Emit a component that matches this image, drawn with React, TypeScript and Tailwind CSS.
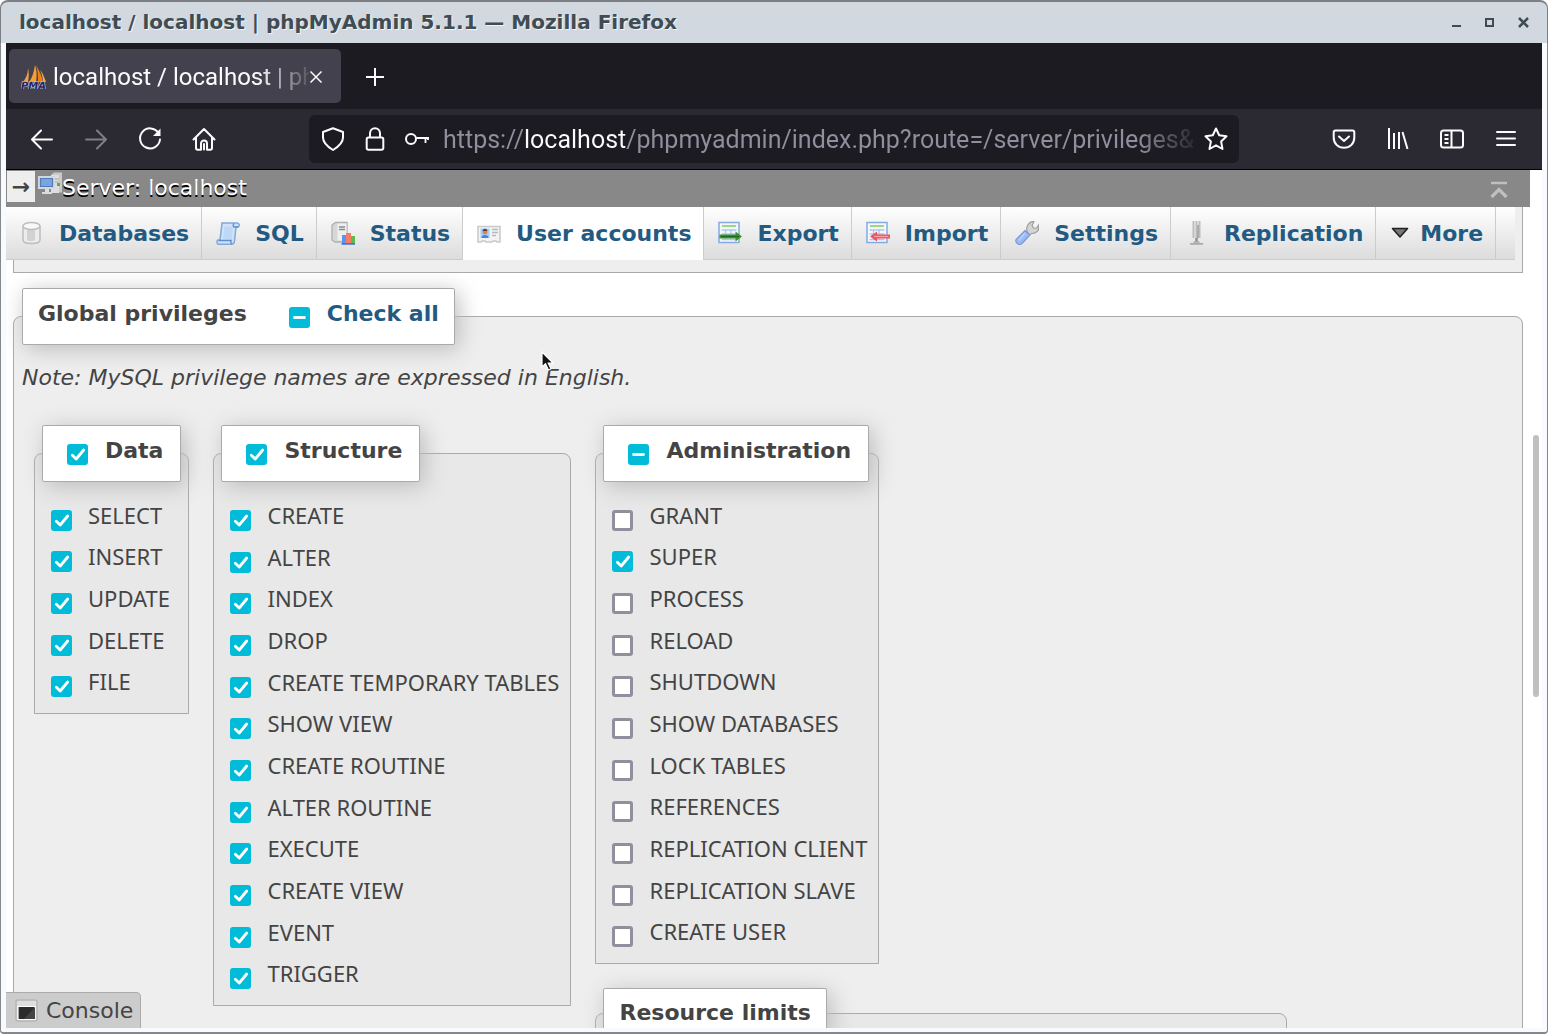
import { useEffect, useRef, useState, type ReactNode } from "react";

const DEJAVU = "font-['DejaVu_Sans','Verdana',sans-serif]";

type Mark = "on" | "off" | "mixed";

function CheckBox({ id, initial }: { id: string; initial: Mark }) {
  const [mark, setMark] = useState<Mark>(initial);
  const ref = useRef<HTMLInputElement>(null);
  useEffect(() => {
    if (ref.current) ref.current.indeterminate = mark === "mixed";
  }, [mark]);
  return (
    <span className="relative block h-[21px] w-[21px] shrink-0">
      <input
        ref={ref}
        id={id}
        type="checkbox"
        checked={mark === "on"}
        onChange={(e) => setMark(e.target.checked ? "on" : "off")}
        className="block h-[21px] w-[21px] appearance-none rounded-[3px] border-3 border-[#8f8f9d] bg-white checked:border-[#00bcd8] checked:bg-[#00bcd8] indeterminate:border-[#00bcd8] indeterminate:bg-[#00bcd8]"
      />
      {mark !== "off" && (
        <svg viewBox="0 0 21 21" className="pointer-events-none absolute inset-0 h-full w-full" fill="none" stroke="#fff" strokeWidth="2.8" strokeLinecap="round" strokeLinejoin="round">
          {mark === "on" ? <path d="M5.3 11.2 9.2 15 16.7 6" /> : <path d="M4.4 10.5H16.6" strokeLinecap="butt" />}
        </svg>
      )}
    </span>
  );
}

const LEGEND = "flex items-center rounded-xs border border-[#aaa] bg-white text-[22px] font-bold shadow-[4px_4px_22px_#bbb]";

function PrivilegeGroup({ name, mark, items, listClass }: { name: string; mark: Mark; items: [string, boolean][]; listClass: string }) {
  return (
    <fieldset className="rounded-t-lg border border-[#aaa] bg-[#e8e8e8] px-[7px] pb-[9px]">
      <legend className={`${LEGEND} h-[57px] gap-[17px] pt-0.5 pr-[17px] pl-6`}>
        <CheckBox id={`group-${name}`} initial={mark} />
        <label htmlFor={`group-${name}`} className="pb-2">
          {name}
        </label>
      </legend>
      <ul className={`mt-3.5 flex flex-col ${listClass}`}>
        {items.map(([text, on]) => (
          <li key={text} className="flex flex-1 items-center gap-4 pl-[9px]">
            <span className="mt-[7px]">
              <CheckBox id={`priv-${text}`} initial={on ? "on" : "off"} />
            </span>
            <label htmlFor={`priv-${text}`} className="pb-1 font-['Noto_Sans',sans-serif] text-[22px] leading-7 whitespace-nowrap">
              {text}
            </label>
          </li>
        ))}
      </ul>
    </fieldset>
  );
}

const on = (list: string[]): [string, boolean][] => list.map((t) => [t, true]);

const DATA = on(["SELECT", "INSERT", "UPDATE", "DELETE", "FILE"]);
const STRUCTURE = on(["CREATE", "ALTER", "INDEX", "DROP", "CREATE TEMPORARY TABLES", "SHOW VIEW", "CREATE ROUTINE", "ALTER ROUTINE", "EXECUTE", "CREATE VIEW", "EVENT", "TRIGGER"]);
const ADMIN: [string, boolean][] = ["GRANT", "SUPER", "PROCESS", "RELOAD", "SHUTDOWN", "SHOW DATABASES", "LOCK TABLES", "REFERENCES", "REPLICATION CLIENT", "REPLICATION SLAVE", "CREATE USER"].map((t) => [t, t === "SUPER"]);

function Svg({ children, box = "0 0 24 24", className = "h-6 w-6" }: { children: ReactNode; box?: string; className?: string }) {
  return (
    <svg viewBox={box} className={`shrink-0 ${className}`} fill="none" aria-hidden="true">
      {children}
    </svg>
  );
}

const dbIcon = (
  <Svg>
    <path d="M3 5v14c0 2 3.5 3.5 8.500 3.500S20 21 20 19V5" fill="#ececec" stroke="#bdbdbd" strokeWidth="1.500" />
    <path d="M7 9v10c2 1.500 6 1.500 8 0V9z" fill="#d2d2d2" />
    <ellipse cx="11.500" cy="5" rx="8.500" ry="3.500" fill="#f8f8f8" stroke="#bdbdbd" strokeWidth="1.500" />
  </Svg>
);
const sqlIcon = (
  <Svg>
    <path d="M6 2h15c2 0 3 2 1.500 4H20l-1.500 14c-.2 2-1 3.200-3 3.200H2.500C.5 23 .5 19.500 2 19h2z" fill="#cfe2f8" stroke="#7fa9db" strokeWidth="1.500" />
    <path d="M8.500 5.500h8.500l-1.500 13H7z" fill="#bdd9f7" />
    <path d="M18 2.500c-1 1-1 3 0 3.500h4M2.500 19.500h12.500c-.5 1 0 3 1 3.500" stroke="#5f90cc" strokeWidth="1.400" />
  </Svg>
);
const statusIcon = (
  <Svg>
    <path d="M1 4 4.500 1.500H16V18l-4 3H4l-3-2z" fill="#d7d7d7" stroke="#b0b0b0" strokeWidth="1.300" />
    <path d="M6.500 2.500h9v17h-9z" fill="#efefef" />
    <path d="M8 6h6M8 8.500h6" stroke="#8c8c8c" strokeWidth="1.300" />
    <path d="M11 14h4v9h-4z" fill="#5b93f0" />
    <path d="M15 12h5v11h-5z" fill="#f57d63" />
    <path d="M20 15h4v8h-4z" fill="#5dbb4d" />
    <path d="M10.500 23h13.500" stroke="#2f62cc" strokeWidth="1.300" />
  </Svg>
);
const userIcon = (
  <Svg>
    <path d="M1 4.500h22V20h-3l-1-1h-3l-1 1H9l-1-1H5l-1 1H1z" fill="#f3f3f3" stroke="#c9c9c9" strokeWidth="1.500" />
    <path d="M3.500 6.500h9V16h-9z" fill="#a5cdf6" />
    <circle cx="8" cy="10" r="2.400" fill="#c98a58" />
    <path d="M5.600 9c0-3 4.800-3 4.800 0z" fill="#5f4030" />
    <path d="M4.500 16c0-4 7-4 7 0z" fill="#3f87d8" />
    <path d="M15 7.500h6M15 10.500h6M15 13.500h4" stroke="#b5b9c0" strokeWidth="1.300" />
  </Svg>
);
const sheet = (
  <>
    <path d="M1 1.500h20v20H1z" fill="#f4f8fe" stroke="#84aae2" strokeWidth="1.500" />
    <path d="M4 5h14" stroke="#9fd686" strokeWidth="2" />
    <path d="M3.500 9h15M3.500 13h15M3.500 18.500h15M7.500 9v10M13 9v10" stroke="#aac6ee" strokeWidth="1.300" />
  </>
);
const exportIcon = (
  <Svg>
    {sheet}
    <path d="M1.500 13.500h16V10.500l6.500 5-6.500 5v-3H1.500z" fill="#3c9131" />
    <path d="M3 15.500h18" stroke="#1f6d1a" strokeWidth="1.300" />
  </Svg>
);
const importIcon = (
  <Svg>
    {sheet}
    <path d="M24 13.500H11V10.500l-7 5 7 5v-3H24z" fill="#f0525a" />
    <path d="M8 15.500h14.500" stroke="#ff9da0" strokeWidth="1.300" />
  </Svg>
);
const settingsIcon = (
  <Svg>
    <path d="M12 10c-1-4 1-8 5-9.500l2 .2-2 3.500 1.500 2.800 3 .2 2-3.200c1.500 5-2 8.500-7 8.500L14 14z" fill="#d4d4d4" stroke="#999" strokeWidth="1.100" />
    <path d="M10 9.500 15 14 6.500 23c-3 1.500-6.500-1-5.500-4.500z" fill="#9db9f1" stroke="#7596da" strokeWidth="1.100" />
    <path d="M10 12 4 19.500" stroke="#b9cdf8" strokeWidth="2" />
  </Svg>
);
const replicationIcon = (
  <Svg>
    <path d="M8.500 0v17M11.500 0v18M14.500 0v17" stroke="#bdbdbd" strokeWidth="2" />
    <path d="M13 4v13" stroke="#8f8f8f" strokeWidth="1.200" />
    <path d="M11.500 17v4" stroke="#909090" strokeWidth="2.500" />
    <path d="M5 22.800h13M8.500 21h6" stroke="#a9a9a9" strokeWidth="1.700" />
  </Svg>
);
const moreIcon = (
  <Svg>
    <path d="M4.500 7.500h15L12 16z" fill="#777" stroke="#222" strokeWidth="1.600" strokeLinejoin="round" />
  </Svg>
);

const TABS: { name: string; icon: ReactNode; active?: boolean }[] = [
  { name: "Databases", icon: dbIcon },
  { name: "SQL", icon: sqlIcon },
  { name: "Status", icon: statusIcon },
  { name: "User accounts", icon: userIcon, active: true },
  { name: "Export", icon: exportIcon },
  { name: "Import", icon: importIcon },
  { name: "Settings", icon: settingsIcon },
  { name: "Replication", icon: replicationIcon },
];

const TAB = "flex grow items-center border-r border-[#ccc] pr-2.5 text-[22px] font-bold whitespace-nowrap text-[#235a81]";
const SHADED = "border-b bg-linear-to-b from-white to-[#dcdcdc]";

function TitleBar() {
  return (
    <header className="flex h-[43px] shrink-0 items-center justify-between rounded-t-lg border-x border-t-2 border-[#7b7f83] bg-[#d1d8e0] pr-4 pb-0.5 pl-[18px] text-[#3f4c54]">
      <h1 className="text-[20px] font-bold [text-shadow:1px_1px_0_#f2f4f6]">localhost / localhost | phpMyAdmin 5.1.1 — Mozilla Firefox</h1>
      <div className="flex items-center gap-[17px]">
        <button aria-label="Minimize">
          <Svg box="0 0 16 16" className="h-4 w-4"><path d="M3 12h9" stroke="#3f4c54" strokeWidth="2" /></Svg>
        </button>
        <button aria-label="Maximize">
          <Svg box="0 0 16 16" className="h-4 w-4"><path d="M4 5h7v7H4z" stroke="#3f4c54" strokeWidth="2" /></Svg>
        </button>
        <button aria-label="Close window">
          <Svg box="0 0 16 16" className="h-4 w-4"><path d="m4 4 9 9m0-9-9 9" stroke="#3f4c54" strokeWidth="2.500" /></Svg>
        </button>
      </div>
    </header>
  );
}

function TabStrip() {
  return (
    <div className="flex h-[66px] shrink-0 items-center bg-[#1c1b22] pl-[3px] font-['Roboto',sans-serif] text-[#fbfbfe]">
      <div className="flex h-[54px] w-[332px] items-center rounded-[5px] bg-[#42414d] pt-0.5 pl-3">
        <Svg box="0 0 26 24" className="mr-1.5 h-6 w-[26px]">
          <path d="M7 3C7 9 5 13 2 17h5c1-5 1-10 0-14z" fill="#f0a24b" />
          <path d="M14 0C13 7 11 13 8 17h7c1-6 1-11-1-17z" fill="#f89c33" />
          <path d="M15 0c3 5 6 11 7 17h-5c0-6 0-11-2-17z" fill="#e98117" />
          <path d="M19 5c3 3 4 7 6 12h-3c0-4-1-8-3-12z" fill="#f9a94c" />
          <text x="0" y="23.500" fontSize="10" fontWeight="700" fontStyle="italic" fontFamily="DejaVu Sans, sans-serif" textRendering="geometricPrecision" fill="#26265e" stroke="#c6c6e0" strokeWidth="1.200" paintOrder="stroke">PMA</text>
        </Svg>
        <span className="w-[256px] overflow-hidden text-2xl whitespace-nowrap [mask-image:linear-gradient(to_right,#000_205px,transparent_262px)]">localhost / localhost | ph</span>
        <button aria-label="Close tab" className="-ml-0.5">
          <Svg box="0 0 18 18" className="h-[18px] w-[18px]"><path d="m3.500 3.500 11 11m0-11-11 11" stroke="#fbfbfe" strokeWidth="1.500" /></Svg>
        </button>
      </div>
      <button aria-label="New tab" className="mt-0.5 ml-[22px]">
        <Svg><path d="M12 3v18M3 12h18" stroke="#fbfbfe" strokeWidth="2" /></Svg>
      </button>
    </div>
  );
}

function Toolbar() {
  const line = { stroke: "#fbfbfe", strokeWidth: 2, strokeLinecap: "round" as const, strokeLinejoin: "round" as const };
  return (
    <div className="flex h-[61px] shrink-0 items-center border-b border-black bg-[#2b2a33] pr-6 pl-6">
      <div className="flex items-center gap-[30px]">
        <button aria-label="Back"><Svg><path d="M22 12.500H2m9-9-9 9 9 9" {...line} /></Svg></button>
        <button aria-label="Forward" disabled className="opacity-40"><Svg><path d="M2 12.500h20m-9-9 9 9-9 9" {...line} /></Svg></button>
        <button aria-label="Reload">
          <Svg>
            <path d="M20.500 6A10 10 0 1 0 22 12.500" {...line} />
            <path d="M22.500 1.500V9H15z" fill="#fbfbfe" />
          </Svg>
        </button>
        <button aria-label="Home">
          <Svg>
            <path d="M1.500 12.500 12 2l10.500 10.500M4 10.500V21c0 1 .7 1.700 1.700 1.700H9V16.500c0-1.700 1.200-3 3-3s3 1.300 3 3v6.200h3.300c1 0 1.700-.7 1.700-1.700V10.500M12 22.500V17" {...line} />
          </Svg>
        </button>
      </div>
      <div className="ml-[93px] flex h-12 min-w-0 flex-1 items-center rounded-md bg-[#1c1b22] pr-[11px] pl-3">
        <button aria-label="Tracking protection"><Svg><path d="M12 1.200 2 5v5.500c0 5 5 9.500 10 12.500 5-3 10-7.500 10-12.500V5z" {...line} /></Svg></button>
        <button aria-label="Connection is secure" className="ml-[18px]">
          <Svg><path d="M5.500 10.500h13c1 0 1.800.8 1.800 1.800V21c0 1-.8 1.800-1.800 1.800h-13c-1 0-1.800-.8-1.800-1.800v-8.700c0-1 .8-1.800 1.800-1.800zM7 10.500V6.500c0-3.200 2.200-5.300 5-5.300s5 2.100 5 5.300v4" {...line} /></Svg>
        </button>
        <button aria-label="Saved login" className="ml-[18px]">
          <Svg>
            <circle cx="6" cy="12" r="5" stroke="#fbfbfe" strokeWidth="2" />
            <path d="M11 11h13M20.500 11v5M23 11v2" stroke="#fbfbfe" strokeWidth="1.800" />
          </Svg>
        </button>
        <input
          aria-label="Address"
          type="text"
          defaultValue="https://localhost/phpmyadmin/index.php?route=/server/privileges&"
          className="ml-3.5 h-10 w-[750px] min-w-0 shrink bg-linear-[to_right,#8f8f9d_81px,#fbfbfe_81px,#fbfbfe_184px,#8f8f9d_184px,#8f8f9d_695px,transparent_760px] bg-clip-text font-['Roboto',sans-serif] text-[25px] text-transparent outline-none"
        />
        <button aria-label="Bookmark this page" className="ml-auto">
          <Svg><path d="m12 1.500 3.200 6.800 7.300 1-5.400 5.100 1.400 7.600-6.500-3.700L5.500 22l1.400-7.600L1.500 9.300l7.300-1z" {...line} /></Svg>
        </button>
      </div>
      <div className="ml-[93px] flex items-center gap-[30px]">
        <button aria-label="Save to Pocket"><Svg><path d="M3.500 3.500h17c1 0 1.800.8 1.800 1.800v5.200c0 6-4.300 10.300-10.300 10.300S1.700 16.500 1.700 10.500V5.300c0-1 .8-1.800 1.800-1.800zM7 9.500l5 4.500 5-4.500" {...line} /></Svg></button>
        <button aria-label="Library"><Svg><path d="M3 1v21M8 6v16M13 5v17M16.500 5l5 17" stroke="#fbfbfe" strokeWidth="2" /></Svg></button>
        <button aria-label="Sidebars">
          <Svg>
            <rect x="1" y="3.500" width="22" height="17" rx="2.500" stroke="#fbfbfe" strokeWidth="2" />
            <path d="M11.500 3.500v17M4.500 8h4M4.500 12h4M4.500 16h4" stroke="#fbfbfe" strokeWidth="2" />
          </Svg>
        </button>
        <button aria-label="Application menu"><Svg><path d="M3 5h18M3 11.500h18M3 18h18" {...line} /></Svg></button>
      </div>
    </div>
  );
}

export default function App() {
  return (
    <div className={`flex h-screen flex-col overflow-hidden bg-white text-[#444] ${DEJAVU}`}>
      <TitleBar />
      <div className="flex min-h-0 flex-1 flex-col rounded-b-sm border-x border-b-2 border-[#85888b] bg-[#f8fafd] px-[5px] pb-1">
        <TabStrip />
        <Toolbar />
        <div className="relative flex min-h-0 flex-1 bg-white">
          <div className="flex min-w-0 flex-1 flex-col overflow-hidden">
            <div className="flex h-[37px] shrink-0 items-start bg-[#888] pl-px">
              <button aria-label="Show panel" className="mt-px h-[31px] w-7 bg-[#eee] text-[22px] leading-8 font-bold">→</button>
              <Svg className="mt-0.5 ml-[3px] h-6 w-6">
                <path d="M13 3 16 .500h8v20h-6z" fill="#c9c9c9" />
                <path d="M13 3h8v18h-8z" fill="#dedede" />
                <path d="M17 7h4M17 10h4" stroke="#a5a5a5" />
                <path d="M0 4h17v13H0z" fill="#d3d6da" />
                <path d="M2.500 6.500h12v8h-12z" fill="#7ba4dc" stroke="#4f7dbf" strokeWidth="1.200" />
                <path d="M7 17h4v3H7zM4 20h10v2H4z" fill="#dcdcdc" />
                <path d="M19 11h3v3h-3z" fill="#4eb24a" />
              </Svg>
              <a href="#server" className="mt-px text-[22px] text-white [text-shadow:0_2px_0_#000]">Server: localhost</a>
              <button aria-label="Scroll to top" className="mt-2 mr-[19px] ml-auto">
                <Svg><path d="M4 5h16" stroke="#bfbfbf" strokeWidth="2.500" /><path d="m4.500 19 7.500-7.500 7.500 7.500" stroke="#bfbfbf" strokeWidth="3.200" /></Svg>
              </button>
            </div>
            <div className="flex h-[53px] shrink-0">
              <nav className="flex min-w-0 flex-1">
                {TABS.map((tab) => (
                  <a key={tab.name} href={`#${tab.name}`} className={`${TAB} gap-[15px] pl-3.5 ${tab.active ? "bg-white" : SHADED}`}>
                    {tab.icon}
                    {tab.name}
                  </a>
                ))}
                <button className={`${TAB} ${SHADED} gap-2 pl-3`}>
                  {moreIcon}
                  More
                </button>
                <div className={`w-[19px] border-[#ccc] ${SHADED}`} />
              </nav>
              <div className="mr-[7px] w-2 border-r border-[#aaa] bg-[#eee]" />
            </div>
            <div className="mx-[7px] h-[13px] shrink-0 border-x border-b border-[#aaa] bg-[#eee]" />
            <main className="min-h-0 flex-1 overflow-hidden px-[7px] pt-[15px]">
              <fieldset className="rounded-t-lg border border-[#aaa] bg-[#eee] px-2 pb-6">
                <legend className={`${LEGEND} h-[57px] px-[15px] pt-0.5`}>
                  <span className="pb-2">Global privileges</span>
                  <span className="mr-[17px] ml-[42px]">
                    <CheckBox id="check-all" initial="mixed" />
                  </span>
                  <label htmlFor="check-all" className="pb-2 text-[#235a81]">Check all</label>
                </legend>
                <p className="mt-[17px] text-[22px] leading-8 italic">Note: MySQL privilege names are expressed in English.</p>
                <div className="mt-[31px] ml-3 flex items-start gap-6">
                  <PrivilegeGroup name="Data" mark="on" items={DATA} listClass="min-h-[208px]" />
                  <PrivilegeGroup name="Structure" mark="on" items={STRUCTURE} listClass="min-h-[500px] min-w-[342px]" />
                  <div className="flex flex-col items-start gap-6">
                    <PrivilegeGroup name="Administration" mark="mixed" items={ADMIN} listClass="min-h-[458px] min-w-[268px]" />
                    <fieldset className="min-h-40 w-[692px] rounded-t-lg border border-[#aaa] bg-[#e8e8e8] px-[7px]">
                      <legend className={`${LEGEND} h-[51px] px-[15px] pb-0.5`}>Resource limits</legend>
                    </fieldset>
                  </div>
                </div>
              </fieldset>
            </main>
          </div>
          <div className="w-3 shrink-0 px-[3px] pt-[265px]">
            <div className="h-[262px] rounded-full bg-[#c0c0c0]" />
          </div>
          <button className="absolute bottom-0 left-0 flex h-9 items-center gap-[7px] rounded-tr-[5px] border-t border-r border-[#aaa] bg-[#ccc] pr-[7px] pl-[9px] text-[22px]">
            <Svg>
              <rect x="1" y="1" width="21" height="21" rx="2" fill="#dedede" stroke="#b5b5b5" strokeWidth="1.500" />
              <path d="M3 7.500h17v13H3z" fill="#2c2c2c" stroke="#fff" strokeWidth="1.200" />
              <path d="M9 20 20 8v12z" fill="#444" />
            </Svg>
            Console
          </button>
          <Svg box="0 0 14 22" className="pointer-events-none absolute top-[181px] left-[535px] h-[22px] w-3.5">
            <path d="M1 1v15l3.500-3.200L7.500 19l2.500-1.200L7.200 12H12z" fill="#111" stroke="#fff" strokeWidth="1.200" />
          </Svg>
        </div>
      </div>
    </div>
  );
}
